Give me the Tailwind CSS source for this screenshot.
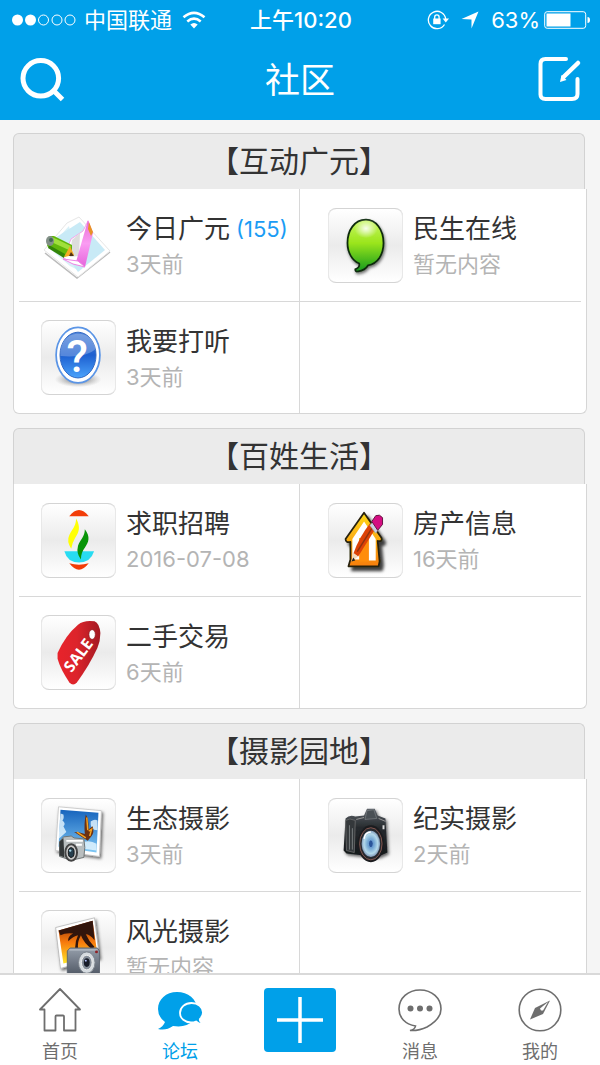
<!DOCTYPE html>
<html lang="zh-CN">
<head>
<meta charset="utf-8">
<meta name="viewport" content="width=device-width, initial-scale=1">
<title>社区</title>
<script src="https://cdn.jsdelivr.net/npm/@tailwindcss/browser@4"></script>
</head>
<body class="flex h-screen flex-col bg-[#f5f5f5] font-['Inter','Noto_Sans_CJK_SC',sans-serif] text-[#333]">

<header class="shrink-0 bg-[#00a0e9] text-white">
  <div class="grid h-10 grid-cols-[1fr_auto_1fr] items-center pr-[10px] pl-3 text-[22px] leading-10">
    <div class="flex items-center gap-2">
      <svg class="h-3 w-16" viewBox="0 0 64 12" fill="none" stroke="#fff" aria-hidden="true"><circle cx="5.500" cy="6" r="5.500" fill="#fff" stroke="none"/><circle cx="18.500" cy="6" r="5.500" fill="#fff" stroke="none"/><circle cx="31.500" cy="6" r="5"/><circle cx="45" cy="6" r="5"/><circle cx="58" cy="6" r="5"/></svg>
      <span class="whitespace-nowrap">中国联通</span>
      <svg class="ml-[2px] h-[18px] w-6" viewBox="0 0 24 18" fill="none" stroke="#fff" stroke-width="2.600" aria-hidden="true"><path d="M1.500 6.300Q12-2.600 22.500 6.300M5.300 10.400Q12 4.800 18.700 10.400"/><path d="M8.300 13.500Q12 10.500 15.700 13.500L12 17.500Z" fill="#fff" stroke="none"/></svg>
    </div>
    <time class="font-medium whitespace-nowrap">上午10:20</time>
    <div class="flex items-center justify-end">
      <svg class="mr-3 h-5 w-[22px]" viewBox="0 0 22 20" fill="none" stroke="#fff" stroke-width="1.300" aria-hidden="true"><path d="M17.500 14.500A8.700 8.700 0 1 1 18.700 9"/><path d="M15.600 8.500h6.400l-3.200 4z" fill="#fff" stroke="none"/><rect x="6.200" y="8.500" width="7.400" height="5.700" fill="#fff" stroke="none"/><path d="M7.700 9V7a2.200 2.200 0 0 1 4.400 0v2"/></svg>
      <svg class="mr-3 h-[18px] w-[18px]" viewBox="0 0 18 18" fill="#fff" aria-hidden="true"><path d="M17.500 .5 10.500 17.500V8.500L.5 8Z"/></svg>
      <span class="mr-1">63%</span>
      <svg class="h-[18px] w-[46px]" viewBox="0 0 46 18" fill="none" aria-hidden="true"><rect x=".7" y=".7" width="41" height="16.600" rx="2.500" stroke="#fff"/><rect x="2.500" y="2.500" width="24" height="13" fill="#fff"/><path d="M43.500 6q2.500 0 2.500 3t-2.500 3z" fill="#fff"/></svg>
    </div>
  </div>
  <div class="flex h-20 items-center justify-between px-[18px]">
    <button type="button" aria-label="搜索"><svg class="size-12" viewBox="0 0 48 48" fill="none" stroke="#fff" aria-hidden="true"><circle cx="22.800" cy="22.300" r="17.800" stroke-width="5"/><path d="m35 34 9.500 9.500" stroke-width="5"/></svg></button>
    <h1 class="text-[35px] leading-[78px]">社区</h1>
    <button type="button" aria-label="发帖"><svg class="size-12" viewBox="0 0 48 48" fill="none" stroke="#fff" stroke-width="4" stroke-linecap="round" aria-hidden="true"><path d="M32 3H11.500q-5 0-5 5V38.500q0 4.500 5 4.500H38q5.500 0 5.500-5V23"/><path d="M44 7 29.500 21" stroke-width="4.500"/><path d="m26 26 1.500-7 5 5z" fill="#fff" stroke="none"/></svg></button>
  </div>
</header>

<main class="flex min-h-0 flex-1 flex-col gap-[14px] overflow-y-auto px-[13px] pt-[13px] pb-4 [scrollbar-width:none]">

  <section class="shrink-0">
    <h2 class="mr-[2px] h-14 rounded-t-[6px] border border-b-0 border-[#d2d2d2] bg-[#ebebeb] text-center text-[30px] leading-[54px]">【互动广元】</h2>
    <div class="rounded-b-[6px] border border-t-0 border-[#d6d6d6] bg-white">
      <div class="grid grid-cols-2">
        <a href="#" class="flex h-28 items-center gap-[10px] border-r border-[#d8d8d8] pl-[27px]">
          <svg class="size-[75px] shrink-0" viewBox="0 0 75 75" aria-hidden="true">
            <defs><linearGradient id="pk" x1="0" y1="0" x2="0" y2="1"><stop stop-color="#e96bd3"/><stop offset=".5" stop-color="#fa9cf2"/><stop offset="1" stop-color="#e563db"/></linearGradient></defs>
            <path d="M4 45 36 70 69 44" fill="none" stroke="#bbb" stroke-width="1.500"/>
            <path d="M3 42 26 15 38 9 69 43 37 69Z" fill="#fff" stroke="#e6e6e6"/>
            <path d="m8 40 20-22 9 44-8-4z" fill="#d9f1f8"/><path d="M14 30 39 14 64 42 37 64Z" fill="#c8eaf6"/>
            <path d="m22 50 8-19 12-8 5-10-4 46z" fill="#fff" stroke="#f1a6ea"/>
            <path d="m31 32 8-7-1 23-9 1z" fill="#ddd"/>
            <path d="M47 12 52 25 44 59 35 54Z" fill="url(#pk)"/><path d="m48 14 4 10-2 4-3-7z" fill="#e89125"/><path d="m22 51 15 2 7 6q-13-2-22-8z" fill="#fff" stroke="#ee82e3"/>
            <path d="M9 28 13 28 31 37 31 46 23 49 6 38Z" fill="#61b70c"/><path d="m11 29 19 9-2 4-20-9z" fill="#a0df3b"/><path d="m8 37 16 9-1 4L7 40z" fill="#328408"/><ellipse cx="9" cy="33" rx="4" ry="5" fill="#829087"/><circle cx="10" cy="32" r="2" fill="#465"/><path d="m29 38 4 9-10 2z" fill="#f4a925"/><path d="m30 44 3 4-5 0z" fill="#523114"/>
          </svg>
          <div class="min-w-0 whitespace-nowrap"><h3 class="flex items-center gap-[6px] text-[26px] leading-[38px]">今日广元<span class="text-[22px] text-[#1a9cf5]">(155)</span></h3><p class="text-[22px] leading-8 text-[#b4b4b4]">3天前</p></div>
        </a>
        <a href="#" class="flex h-28 items-center gap-[10px] pl-[28px]">
          <svg class="size-[75px] shrink-0 rounded-lg border-y border-[#d4d4d4] bg-linear-to-b from-white via-[#ebebeb] to-white shadow-[inset_1px_0_#e8e8e8,inset_-1px_0_#e8e8e8]" viewBox="0 0 75 75" aria-hidden="true">
            <defs><linearGradient id="gr" x1="0" y1="0" x2="0" y2="1"><stop stop-color="#c8f763"/><stop offset=".45" stop-color="#9be51b"/><stop offset="1" stop-color="#139a20"/></linearGradient><radialGradient id="hl"><stop stop-color="#fff" stop-opacity=".9"/><stop offset="1" stop-color="#fff" stop-opacity="0"/></radialGradient><filter id="sh" x="-30%" y="-30%" width="160%" height="160%"><feDropShadow dx="1" dy="2" stdDeviation="1.800" flood-opacity=".55"/></filter></defs>
            <path d="M38 11C26 11 19 22 19 35c0 10 5 18 12 21q1 4-4 6 0 3 3 2 7-1 10-6c10-2 16-11 16-23 0-14-8-24-18-24Z" fill="url(#gr)" stroke="#102b0c" stroke-width="1.800" filter="url(#sh)"/><ellipse cx="38" cy="20" rx="12" ry="10" fill="url(#hl)"/>
          </svg>
          <div class="min-w-0 whitespace-nowrap"><h3 class="text-[26px] leading-[38px]">民生在线</h3><p class="text-[22px] leading-8 text-[#b4b4b4]">暂无内容</p></div>
        </a>
      </div>
      <hr class="mx-[5px] border-[#d8d8d8]">
      <div class="grid grid-cols-2">
        <a href="#" class="flex h-[111px] items-center gap-[10px] border-r border-[#d8d8d8] pl-[27px]">
          <svg class="size-[75px] shrink-0 rounded-lg border-y border-[#d4d4d4] bg-linear-to-b from-white via-[#ebebeb] to-white shadow-[inset_1px_0_#e8e8e8,inset_-1px_0_#e8e8e8]" viewBox="0 0 75 75" aria-hidden="true">
            <defs><linearGradient id="bl" x1="0" y1="0" x2="0" y2="1"><stop stop-color="#4e83d8"/><stop offset=".5" stop-color="#1d5fd0"/><stop offset="1" stop-color="#4ba3fb"/></linearGradient><radialGradient id="sd"><stop stop-color="#333" stop-opacity=".8"/><stop offset="1" stop-color="#888" stop-opacity="0"/></radialGradient></defs>
            <ellipse cx="37" cy="60" rx="24" ry="8" fill="url(#sd)"/>
            <ellipse cx="37" cy="35" rx="22.500" ry="28.500" fill="#fff" stroke="#5b95e6" stroke-width="1.800"/><ellipse cx="37" cy="35" rx="18.500" ry="23.500" fill="url(#bl)" stroke="#2e67c3"/><path d="M19 36C18 22 26 13 37 13s18 8 18 16Q45 38 19 36Z" fill="#fff" opacity=".25"/>
            <text x="36" y="52" text-anchor="middle" font-family="Roboto" font-weight="500" font-size="45" fill="#fff">?</text>
          </svg>
          <div class="min-w-0 whitespace-nowrap"><h3 class="text-[26px] leading-[38px]">我要打听</h3><p class="text-[22px] leading-8 text-[#b4b4b4]">3天前</p></div>
        </a>
      </div>
    </div>
  </section>

  <section class="shrink-0">
    <h2 class="mr-[2px] h-14 rounded-t-[6px] border border-b-0 border-[#d2d2d2] bg-[#ebebeb] text-center text-[30px] leading-[54px]">【百姓生活】</h2>
    <div class="rounded-b-[6px] border border-t-0 border-[#d6d6d6] bg-white">
      <div class="grid grid-cols-2">
        <a href="#" class="flex h-28 items-center gap-[10px] border-r border-[#d8d8d8] pl-[27px]">
          <svg class="size-[75px] shrink-0 rounded-lg border-y border-[#d4d4d4] bg-linear-to-b from-white via-[#ebebeb] to-white shadow-[inset_1px_0_#e8e8e8,inset_-1px_0_#e8e8e8]" viewBox="0 0 75 75" aria-hidden="true">
            <path d="M28 12.500Q38 0 48 12.500Z" fill="#f23d08"/><path d="M35 15c5 9 3 14-1 20q-3 5-4 11-5-8-2-14c3-6 7-9 7-17Z" fill="#ffff05"/><path d="M23 48.500H53.500Q50 60 38 60T23 48.500Z" fill="#28dcf2"/><path d="M44 26c6 8 4 13 0 19q-4 5-4 12-5-6-3-14c2-6 7-9 7-17Z" fill="#079407"/><path d="M28 61q10 3 20 0-10 13-20 0Z" fill="#f23d08"/>
          </svg>
          <div class="min-w-0 whitespace-nowrap"><h3 class="text-[26px] leading-[38px]">求职招聘</h3><p class="text-[22px] leading-8 text-[#b4b4b4]">2016-07-08</p></div>
        </a>
        <a href="#" class="flex h-28 items-center gap-[10px] pl-[28px]">
          <svg class="size-[75px] shrink-0 rounded-lg border-y border-[#d4d4d4] bg-linear-to-b from-white via-[#ebebeb] to-white shadow-[inset_1px_0_#e8e8e8,inset_-1px_0_#e8e8e8]" viewBox="0 0 75 75" aria-hidden="true">
            <defs><linearGradient id="hs" x1="0" y1="0" x2="0" y2="1"><stop stop-color="#ffd91a"/><stop offset="1" stop-color="#f77f08"/></linearGradient><filter id="hsh" x="-30%" y="-30%" width="170%" height="170%"><feDropShadow dx="3.500" dy="4" stdDeviation="1.500" flood-opacity=".75"/></filter></defs>
            <path d="M36 9 17 36q0 4 5 3V57l-2 7h31l1-5-2-21q5 1 4-3Z" fill="url(#hs)" stroke="#28200d" stroke-width="1.800" stroke-linejoin="round" filter="url(#hsh)"/>
            <path d="M36 18 24 36V57h8V38h8v20h8V36Z" fill="#fff"/><path d="M31 35h10v24H31z" fill="#ff8d0b"/><path d="M31 35h5v6h-5z" fill="#e4ca15"/>
            <path d="m25 51 5 3 18-29-6-5q-11 14-17 31Z" fill="#dd4308"/><path d="m29 49 15-24" stroke="#8f3412" stroke-width="1.500"/><path d="m25 50 5 4-7 5z" fill="#f4dbbd"/><path d="m23 59 2-4 2 3z" fill="#222"/><path d="m42 22 5-6 6 7-5 7Z" fill="#ccd1e3" stroke="#9799a9" stroke-width=".6"/><path d="m44 18 4-6q4-2 7 2v7l-5 6Z" fill="#d40d82" stroke="#641541"/>
          </svg>
          <div class="min-w-0 whitespace-nowrap"><h3 class="text-[26px] leading-[38px]">房产信息</h3><p class="text-[22px] leading-8 text-[#b4b4b4]">16天前</p></div>
        </a>
      </div>
      <hr class="mx-[5px] border-[#d8d8d8]">
      <div class="grid grid-cols-2">
        <a href="#" class="flex h-[111px] items-center gap-[10px] border-r border-[#d8d8d8] pl-[27px]">
          <svg class="size-[75px] shrink-0 rounded-lg border-y border-[#d4d4d4] bg-linear-to-b from-white via-[#ebebeb] to-white shadow-[inset_1px_0_#e8e8e8,inset_-1px_0_#e8e8e8]" viewBox="0 0 75 75" aria-hidden="true">
            <defs><linearGradient id="tg"><stop stop-color="#e8232b"/><stop offset=".45" stop-color="#dc242b"/><stop offset="1" stop-color="#a31922"/></linearGradient></defs>
            <path d="M16 38Q24 20 37 9 43 4 54 5.500q5 2 6 12 0 8-3 15Q49 50 36 68q-4 5-8 0-9-13-12-24Z" fill="url(#tg)"/><ellipse cx="51.500" cy="19" rx="3.300" ry="5" fill="#fff" stroke="#871b20" stroke-width=".7"/>
            <text x="37" y="46" text-anchor="middle" transform="rotate(-53 37 40)" font-family="Open Sans" font-weight="700" font-size="16" fill="#fff">SALE</text>
          </svg>
          <div class="min-w-0 whitespace-nowrap"><h3 class="text-[26px] leading-[38px]">二手交易</h3><p class="text-[22px] leading-8 text-[#b4b4b4]">6天前</p></div>
        </a>
      </div>
    </div>
  </section>

  <section class="shrink-0">
    <h2 class="mr-[2px] h-14 rounded-t-[6px] border border-b-0 border-[#d2d2d2] bg-[#ebebeb] text-center text-[30px] leading-[54px]">【摄影园地】</h2>
    <div class="rounded-b-[6px] border border-t-0 border-[#d6d6d6] bg-white">
      <div class="grid grid-cols-2">
        <a href="#" class="flex h-28 items-center gap-[10px] border-r border-[#d8d8d8] pl-[27px]">
          <svg class="size-[75px] shrink-0 rounded-lg border-y border-[#d4d4d4] bg-linear-to-b from-white via-[#ebebeb] to-white shadow-[inset_1px_0_#e8e8e8,inset_-1px_0_#e8e8e8]" viewBox="0 0 75 75" aria-hidden="true">
            <defs><linearGradient id="sk" x1="0" y1="0" x2="0" y2="1"><stop stop-color="#1764bd"/><stop offset="1" stop-color="#7ec7f4"/></linearGradient><filter id="ps" x="-20%" y="-20%" width="150%" height="150%"><feDropShadow dx="1.500" dy="2" stdDeviation="1.500" flood-opacity=".6"/></filter></defs>
            <path d="M17 8 61 12 59 59 14 53Z" fill="#fff" stroke="#bbb" stroke-width=".7" filter="url(#ps)"/><path d="M19 11 58 14 56 55 17 49Z" fill="url(#sk)"/><path d="m19 15 3 1q1 4-1 6 4 3 1 6l3 6-8 7zM50 23q4-3 7-1v10q-8 0-7-9ZM43 44q7-2 13 2v7l-14-2z" fill="#e8f7ff" opacity=".8"/>
            <path d="M45 16q3 4 3 15l4-3q2 6-1 10l-4 5-14-9q6 0 11 2-1-11 1-20Z" fill="#6b3013"/><path d="m46 19 1 13M48 33l3-2-2 7M36 34l9 6" stroke="#f4a321" stroke-width="1.500" fill="none"/>
            <path d="m18 44 4-5 8-1 3 2 10 1q2 8 0 19l-13 3-12-4Z" fill="#b9bebf" stroke="#6e7475"/><path d="m18 44 4-4 1 20-5-2z" fill="#343839"/><path d="M25 43h17M35 47h6" stroke="#fff" stroke-width="2"/><ellipse cx="30" cy="55" rx="6" ry="8.500" fill="#ccc" stroke="#444" stroke-width="2"/><ellipse cx="30" cy="55" rx="3" ry="5" fill="#263f4e" stroke="#111"/><circle cx="29" cy="53" r="1.200" fill="#a8d6e8"/>
          </svg>
          <div class="min-w-0 whitespace-nowrap"><h3 class="text-[26px] leading-[38px]">生态摄影</h3><p class="text-[22px] leading-8 text-[#b4b4b4]">3天前</p></div>
        </a>
        <a href="#" class="flex h-28 items-center gap-[10px] pl-[28px]">
          <svg class="size-[75px] shrink-0 rounded-lg border-y border-[#d4d4d4] bg-linear-to-b from-white via-[#ebebeb] to-white shadow-[inset_1px_0_#e8e8e8,inset_-1px_0_#e8e8e8]" viewBox="0 0 75 75" aria-hidden="true">
            <defs><linearGradient id="cb" x1="0" y1="0" x2="0" y2="1"><stop stop-color="#5e646a"/><stop offset=".4" stop-color="#262a2e"/><stop offset="1" stop-color="#15181b"/></linearGradient><radialGradient id="ln"><stop stop-color="#174486"/><stop offset=".3" stop-color="#6a9fd0"/><stop offset=".75" stop-color="#b4d9ea"/><stop offset="1" stop-color="#8098b8"/></radialGradient></defs>
            <path d="M17 20q4-4 10-2l9-1 3-7 8 0 3 7 8 3 2 35-9 4-15-1-18-2-3-3Z" fill="url(#cb)" filter="url(#ps)"/><path d="M17 22q4-3 10 0l-1 33-8-2Z" fill="#34383b" stroke="#777" stroke-width=".7"/><path d="M21 27v25M24 30v22" stroke="#777c7e"/><path d="m39 12 7-1 3 9-12 1Z" fill="#4a5055" stroke="#858a8e" stroke-width=".6"/><path d="m28 21 8-2M51 20l7 3" stroke="#999"/>
            <ellipse cx="43" cy="46" rx="13.500" ry="19" fill="#1b1c1f"/><ellipse cx="43" cy="46" rx="11.500" ry="16.500" fill="#272a2f" stroke="#925e55" stroke-width=".9"/><ellipse cx="43" cy="46" rx="9.500" ry="13.500" fill="url(#ln)"/><ellipse cx="43" cy="46" rx="2.500" ry="4" fill="#2a559a" stroke="#83b6e3" stroke-width=".8"/><path d="M36 41q1-7 7-7" stroke="#fff" stroke-width="1.500" fill="none"/><path d="M56 27v4" stroke="#ddd" stroke-width="2"/>
          </svg>
          <div class="min-w-0 whitespace-nowrap"><h3 class="text-[26px] leading-[38px]">纪实摄影</h3><p class="text-[22px] leading-8 text-[#b4b4b4]">2天前</p></div>
        </a>
      </div>
      <hr class="mx-[5px] border-[#d8d8d8]">
      <div class="grid grid-cols-2">
        <a href="#" class="flex h-[111px] items-center gap-[10px] border-r border-[#d8d8d8] pl-[27px]">
          <svg class="size-[75px] shrink-0 rounded-lg border-y border-[#d4d4d4] bg-linear-to-b from-white via-[#ebebeb] to-white shadow-[inset_1px_0_#e8e8e8,inset_-1px_0_#e8e8e8]" viewBox="0 0 75 75" aria-hidden="true">
            <defs><linearGradient id="su" x1="0" y1="0" x2="0" y2="1"><stop stop-color="#8d2b08"/><stop offset=".5" stop-color="#f77a0d"/><stop offset="1" stop-color="#ffe529"/></linearGradient><linearGradient id="cm" x1="0" y1="0" x2="0" y2="1"><stop stop-color="#959eaa"/><stop offset="1" stop-color="#414956"/></linearGradient></defs>
            <path d="M14 17 54 7 59 48 19 59Z" fill="#fff" stroke="#aaa" stroke-width=".7" filter="url(#ps)"/><path d="M17 20 52 10 57 45 22 54Z" fill="url(#su)"/><path d="M17 20 52 10l2 20q-5-6-9-6 3 7 9 13l-3 2q-8-6-11-14-4 7-3 14l-3-1q0-7 3-13-5 1-10 6-1-5 5-8-8-1-13 2Z" fill="#32150c"/>
            <path d="m26 41 3-3 28 0 2 3v31H26Z" fill="url(#cm)" stroke="#5d6672"/><path d="M28 40h29" stroke="#c3cad2"/><ellipse cx="46" cy="53" rx="8.500" ry="11" fill="#d5dbe0" stroke="#7d858d"/><ellipse cx="46" cy="53" rx="5.500" ry="7.500" fill="#848d98" stroke="#eee"/><ellipse cx="46" cy="53" rx="3" ry="4.500" fill="#171c29"/><circle cx="45" cy="51" r="1" fill="#b6c5ff"/><circle cx="56" cy="42" r="1.500" fill="#8f2024"/>
          </svg>
          <div class="min-w-0 whitespace-nowrap"><h3 class="text-[26px] leading-[38px]">风光摄影</h3><p class="text-[22px] leading-8 text-[#b4b4b4]">暂无内容</p></div>
        </a>
      </div>
    </div>
  </section>
</main>

<nav class="grid h-[92px] shrink-0 grid-cols-5 border-t-2 border-[#d9d9d9] bg-white text-center text-[18px] leading-6 text-[#6e6e6e]">
  <a href="#" class="flex flex-col items-center gap-2 pt-3"><svg class="h-[45px] w-11" viewBox="0 0 44 45" fill="none" stroke="#6e6e6e" stroke-width="1.800" stroke-linejoin="round" aria-hidden="true"><path d="M22 2 2 22.500H6.500V43.500H17.500V29.500Q17.500 28.500 18.500 28.500H25Q26 28.500 26 29.500V43.500H37.500V22.500H42Z"/></svg>首页</a>
  <a href="#" aria-current="page" class="flex flex-col items-center gap-2 pt-3 text-[#00a0e9]"><svg class="h-[45px] w-[46px]" viewBox="0 0 46 45" fill="#00a0e9" aria-hidden="true"><path d="M20 5C9 5 1 12.500 1 22q0 8 7 13-2 5-7 7 8 2 15-3 13 2 20-5Q40 28 40 22C40 12 31 5 20 5Z"/><path d="M34.500 16C28 16 23 20.500 23 26s5 9.500 11 9.500q3 0 5-1 3 3 7 2.500-4-3-3-5 3-3 3-6.500C46 20 41 16 34.500 16Z" stroke="#fff" stroke-width="1.800"/></svg>论坛</a>
  <div class="flex items-start justify-center pt-[13px]"><button type="button" aria-label="新建" class="flex h-16 w-[72px] items-center justify-center rounded-[4px] bg-[#00a0e9]"><svg class="size-[46px]" viewBox="0 0 46 46" stroke="#fff" stroke-width="3.500" aria-hidden="true"><path d="M23 0V46M0 23H46"/></svg></button></div>
  <a href="#" class="flex flex-col items-center gap-2 pt-3"><svg class="h-[45px] w-[46px]" viewBox="0 0 46 45" fill="none" stroke="#6e6e6e" stroke-width="1.600" aria-hidden="true"><path d="M13 43.500q5-1 5.500-4.500C8 37 2 30.500 2 22 2 11 11 3 23 3s21 8 21 19c0 9-7 14-14 18q-8 4-17 3.500Z"/><g fill="#6e6e6e" stroke="none"><circle cx="13.500" cy="21.500" r="3"/><circle cx="23" cy="21.500" r="3"/><circle cx="32.500" cy="21.500" r="3"/></g></svg>消息</a>
  <a href="#" class="flex flex-col items-center gap-2 pt-3"><svg class="h-[45px] w-[46px]" viewBox="0 0 46 45" fill="none" stroke="#6e6e6e" stroke-width="1.600" aria-hidden="true"><circle cx="23" cy="23" r="20.800"/><path d="M33 13.500 18 21 13 32.500 26 27Z" fill="#6e6e6e" stroke="none"/><path d="m31 15-8 6.500 1 2 2 0z" fill="#fff" stroke="none"/></svg>我的</a>
</nav>
</body>
</html>
